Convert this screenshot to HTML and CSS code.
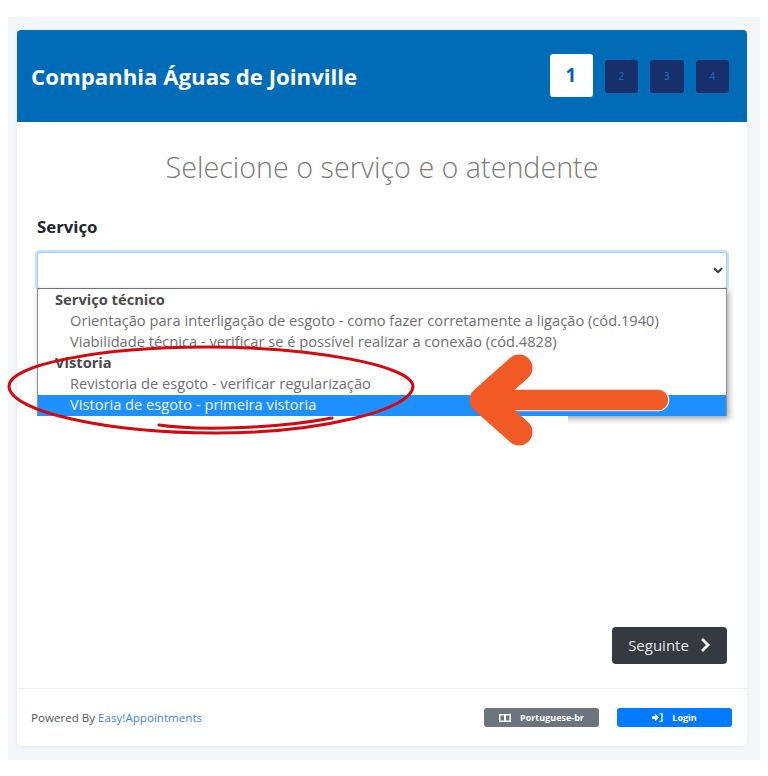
FILE: index.html
```html
<!DOCTYPE html>
<html lang="pt-BR">
<head>
<meta charset="utf-8">
<title>Companhia Águas de Joinville</title>
<link rel="stylesheet" href="styles.css">
</head>
<body>
<div class="panel">
  <div class="card">
    <header class="header">
      <h1 class="company">Companhia Águas de Joinville</h1>
      <div class="steps">
        <span class="step active">1</span>
        <span class="step">2</span>
        <span class="step">3</span>
        <span class="step">4</span>
      </div>
    </header>
    <main class="main">
      <h2 class="title">Selecione o serviço e o atendente</h2>
      <label class="label">Serviço</label>
      <div class="field">
        <div class="select">
          <svg class="chevron" width="10" height="7" viewBox="0 0 10 7"><path d="M1 1.2l4 4 4-4" fill="none" stroke="#343a40" stroke-width="2"/></svg>
        </div>
        <div class="menu-mask"></div>
        <div class="menu">
          <div class="group">Serviço técnico</div>
          <div class="option">Orientação para interligação de esgoto - como fazer corretamente a ligação (cód.1940)</div>
          <div class="option">Viabilidade técnica - verificar se é possível realizar a conexão (cód.4828)</div>
          <div class="group">Vistoria</div>
          <div class="option">Revistoria de esgoto - verificar regularização</div>
          <div class="option selected">Vistoria de esgoto - primeira vistoria</div>
        </div>
      </div>
      <div class="actions">
        <button class="next">Seguinte
          <svg width="11" height="16" viewBox="0 0 11 16"><path d="M2 2l6 6-6 6" fill="none" stroke="#fff" stroke-width="2.8"/></svg>
        </button>
      </div>
    </main>
    <footer class="footer">
      <div class="powered">Powered By <a class="link">Easy!Appointments</a></div>
      <div class="footer-buttons">
        <button class="mini gray">
          <svg width="12" height="8" viewBox="0 0 12 8"><path d="M0 0h12v8H0z" fill="#fff"/><path d="M1.5 1.5h3.5v5h-3.500zM7 1.500h3.500v5H7z" fill="#6c757d"/></svg>
          Portuguese-br
        </button>
        <button class="mini blue">
          <svg width="11" height="9" viewBox="0 0 11 9"><path d="M0 3h3V.8L7 4.500 3 8.200V6H0z" fill="#fff"/><path d="M7.500.7h2.500v7.600H7.500" fill="none" stroke="#fff" stroke-width="1.300"/></svg>
          Login
        </button>
      </div>
    </footer>
  </div>
</div>
<svg class="marks" width="768" height="776" viewBox="0 0 768 776">
  <path d="M413 386C411 365 310 347 205 347 100 347 9 365 9 386 9 412 110 433 215 433 320 433 413 410 413 386" fill="none" stroke="#d4090f" stroke-width="3" stroke-linecap="round"/>
  <path d="M159 425C200 431 280 428 332 418" fill="none" stroke="#d4090f" stroke-width="3" stroke-linecap="round"/>
  <path d="M519 368l-36 32 36 32M486 400H658" fill="none" stroke="#fff" stroke-width="22.500" stroke-linecap="round" stroke-linejoin="round"/>
  <path d="M519 368l-36 32 36 32" fill="none" stroke="#f15a24" stroke-width="27" stroke-linecap="round" stroke-linejoin="round"/>
  <path d="M486 400H658" fill="none" stroke="#f15a24" stroke-width="20.500" stroke-linecap="round"/>
</svg>
</body>
</html>
```
FILE: styles.css
```css
* { box-sizing: border-box; }
html, body { margin: 0; height: 776px; background: #fff; overflow: hidden; }
body { font-family: "Open Sans", "Liberation Sans", sans-serif; color: #343a40; position: relative; }

.panel {
  margin: 17px 8px 0;
  height: 743px;
  padding: 13px 13px 14px 9px;
  background: #f4f7fa;
}
.card {
  height: 716px;
  display: flex;
  flex-direction: column;
  background: #fff;
  border-radius: 4px;
  box-shadow: 0 1px 4px rgba(0, 0, 0, .06);
}

.header {
  height: 92px;
  flex: none;
  display: flex;
  align-items: center;
  justify-content: space-between;
  padding: 0 18px 0 14px;
  background: #006cb8;
  border-radius: 4px 4px 0 0;
}
.company { margin: 0; font-size: 22.200px; font-weight: 700; color: #fff; }
.steps { display: flex; align-items: center; gap: 12px; }
.step {
  width: 33.500px;
  height: 33px;
  display: flex;
  align-items: center;
  justify-content: center;
  background: #17306c;
  color: #1b62b4;
  font-size: 10px;
  font-weight: 600;
  border-radius: 3px;
}
.step.active {
  width: 43px;
  height: 43px;
  margin-bottom: 2px;
  background: #fff;
  color: #0b62b8;
  font-size: 19px;
  font-weight: 700;
}

.main { flex: 1; display: flex; flex-direction: column; padding: 0 20px; }
.title {
  margin: 24px 0 0;
  height: 42px;
  font-size: 28.700px;
  line-height: 42px;
  font-weight: 300;
  color: #7b7b7b;
  text-align: center;
}
.label {
  margin-top: 27px;
  height: 24px;
  line-height: 24px;
  font-size: 16.800px;
  font-weight: 700;
  color: #212529;
}
.field { margin-top: 13px; position: relative; }
.select {
  height: 37px;
  background: #fff;
  border: 1px solid #a4cdf8;
  border-radius: 3px;
  box-shadow: 0 0 0 2px #c4e0fd;
  display: flex;
  align-items: center;
  justify-content: flex-end;
  padding-right: 3px;
}
.menu {
  position: absolute;
  left: 0;
  right: 0;
  top: 36px;
  padding-top: 1px;
  background: #fff;
  border: 1px solid #8e9297;
  border-top-color: #6d7278;
  border-bottom: 0;
  box-shadow: 2px 3px 6px rgba(0, 0, 0, .35);
  font-size: 14.670px;
  line-height: 19px;
  height: 128px;
  z-index: 1;
}
.menu-mask {
  position: absolute;
  left: -8px;
  width: 539px;
  top: 164px;
  height: 20px;
  background: #fff;
  z-index: 2;
}
.group { height: 21px; padding-left: 17px; font-weight: 700; color: #4a4a4f; }
.option { height: 21px; padding-left: 32px; color: #6f6f73; white-space: nowrap; }
.option.selected { background: #1e90ff; color: #f2f8ff; }

.actions { margin-top: auto; margin-bottom: 24px; display: flex; justify-content: flex-end; }
.next {
  width: 115px;
  height: 37px;
  display: flex;
  align-items: center;
  justify-content: center;
  gap: 11px;
  padding: 0 0 2px;
  border: 0;
  border-radius: 4px;
  background: #343a40;
  color: #e4e6e8;
  font: 400 15px "Open Sans", sans-serif;
}

.footer {
  height: 58px;
  flex: none;
  display: flex;
  align-items: center;
  justify-content: space-between;
  padding: 0 15px 0 14px;
  border-top: 1px solid #eceeef;
}
.powered { font-size: 11.600px; color: #55595c; }
.link { color: #3f85e0; }
.footer-buttons { display: flex; gap: 18px; }
.mini {
  width: 115px;
  height: 19px;
  display: flex;
  align-items: center;
  justify-content: center;
  gap: 9px;
  padding: 0;
  border: 0;
  border-radius: 3px;
  color: #fff;
  font: 700 9px "Open Sans", sans-serif;
}
.gray { background: #6c757d; }
.blue { background: #007bff; }

.marks { position: absolute; left: 0; top: 0; pointer-events: none; z-index: 5; }
```
